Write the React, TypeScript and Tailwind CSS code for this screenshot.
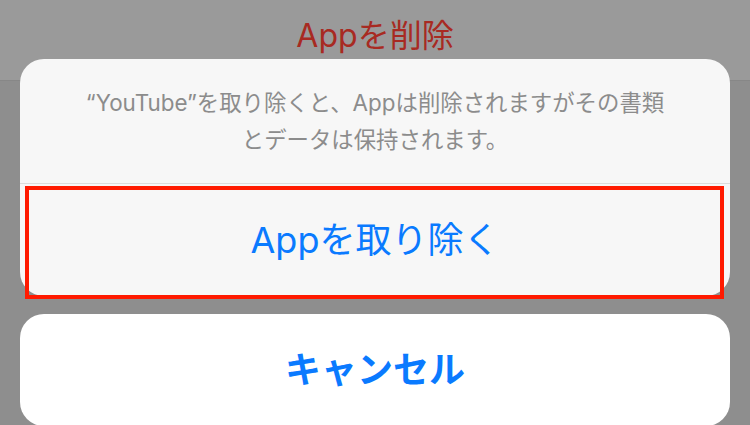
import React from "react";

export default function App() {
  const font = {
    fontFamily: 'Inter, "Noto Sans CJK JP", "Noto Sans", sans-serif',
  };
  return (
    <div
      className="relative w-[750px] h-[425px] overflow-hidden bg-[#8e8e8e]"
      style={font}
    >
      <div className="h-[81px] bg-[#9a9a9a] border-b border-[#878787] flex justify-center">
        <div className="pt-[16px] text-[32px] leading-[40px] text-[#a82a22]">
          Appを削除
        </div>
      </div>

      <div className="absolute left-[20px] right-[20px] top-[59px] flex flex-col gap-[18px]">
        <div className="rounded-[24px] bg-[#f7f7f7] overflow-hidden flex flex-col">
          <div className="h-[124px] flex items-center justify-center text-center text-[22.4px] leading-[37px] text-[#8c8c8c]">
            <p>
              “YouTube”を取り除くと、Appは削除されますがその書類
              <br />
              とデータは保持されます。
            </p>
          </div>
          <div className="h-px bg-[#dcdcdc]" />
          <div className="h-[112px] flex items-center justify-center text-[36px] text-[#0a7aff]">
            Appを取り除く
          </div>
        </div>
        <div className="h-[112px] rounded-[24px] bg-white flex items-center justify-center text-[36px] font-bold text-[#0a7aff]">
          キャンセル
        </div>

        <div className="absolute left-[5px] top-[127px] w-[699px] h-[113px] border-[4px] border-[#ff1a00]" />
      </div>
    </div>
  );
}
